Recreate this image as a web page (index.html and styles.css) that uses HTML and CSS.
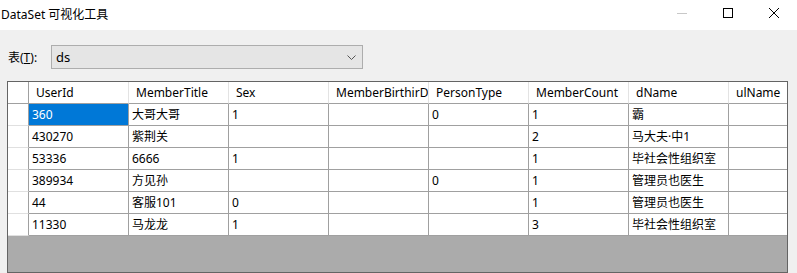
FILE: index.html
```html
<!DOCTYPE html>
<html lang="zh">
<head>
  <meta charset="UTF-8" />
  <title>DataSet 可视化工具</title>
  <link rel="stylesheet" href="styles.css">
</head>
<body>
  <div class="window">
    <div class="titlebar">
      <span class="title">DataSet 可视化工具</span>
      <div class="controls">
        <span class="ctl min"><svg width="10" height="10" viewBox="0 0 10 10"><path d="M0 5.5h10" stroke="#c8c8c8" stroke-width="1"/></svg></span>
        <span class="ctl"><svg width="10" height="10" viewBox="0 0 10 10"><rect x="0.5" y="0.5" width="9" height="9" fill="none" stroke="#000" stroke-width="1"/></svg></span>
        <span class="ctl"><svg width="10" height="10" viewBox="0 0 10 10"><path d="M0 0L10 10M10 0L0 10" stroke="#000" stroke-width="1"/></svg></span>
      </div>
    </div>

    <div class="content">
      <div class="toolbar">
        <label class="lbl">表(<u>T</u>):</label>
        <div class="combo">
          <span>ds</span>
          <svg class="chev" width="9" height="5" viewBox="0 0 9 5"><path d="M0.5 0.5L4.5 4.5L8.5 0.5" fill="none" stroke="#555" stroke-width="1"/></svg>
        </div>
      </div>

      <div class="grid">
        <table>
          <thead>
            <tr>
              <th class="rh"></th>
              <th>UserId</th>
              <th>MemberTitle</th>
              <th>Sex</th>
              <th>MemberBirthirDate</th>
              <th>PersonType</th>
              <th>MemberCount</th>
              <th>dName</th>
              <th>ulName</th>
            </tr>
          </thead>
          <tbody>
            <tr><td class="rh"></td><td class="sel">360</td><td>大哥大哥</td><td>1</td><td></td><td>0</td><td>1</td><td>霸</td><td></td></tr>
            <tr><td class="rh"></td><td>430270</td><td>紫荆关</td><td></td><td></td><td></td><td>2</td><td>马大夫·中1</td><td></td></tr>
            <tr><td class="rh"></td><td>53336</td><td>6666</td><td>1</td><td></td><td></td><td>1</td><td>毕社会性组织室</td><td></td></tr>
            <tr><td class="rh"></td><td>389934</td><td>方见孙</td><td></td><td></td><td>0</td><td>1</td><td>管理员也医生</td><td></td></tr>
            <tr><td class="rh"></td><td>44</td><td>客服101</td><td>0</td><td></td><td></td><td>1</td><td>管理员也医生</td><td></td></tr>
            <tr><td class="rh"></td><td>11330</td><td>马龙龙</td><td>1</td><td></td><td></td><td>3</td><td>毕社会性组织室</td><td></td></tr>
          </tbody>
        </table>
      </div>
    </div>
  </div>
</body>
</html>
```

FILE: styles.css
```css
* {
  box-sizing: border-box;
  margin: 0;
  padding: 0;
}

body {
  font-family: "Noto Sans", "Noto Sans CJK SC", sans-serif;
  font-size: 12px;
  color: #000;
  background: #f0f0f0;
  overflow: hidden;
}

.window {
  width: 797px;
  height: 273px;
  display: flex;
  flex-direction: column;
}

.titlebar {
  height: 30px;
  background: #fff;
  display: flex;
  align-items: center;
  justify-content: space-between;
  flex-shrink: 0;
}

.title {
  padding-left: 1px;
  padding-bottom: 3px;
}

.controls {
  display: flex;
  height: 100%;
}

.ctl {
  width: 46px;
  height: 100%;
  display: flex;
  align-items: center;
  justify-content: center;
  padding-bottom: 4px;
}

.ctl svg {
  display: block;
}

.content {
  flex: 1;
  display: flex;
  flex-direction: column;
  padding: 15px 9px 0 7px;
  min-height: 0;
}

.toolbar {
  display: flex;
  align-items: center;
  height: 24px;
}

.lbl {
  width: 44px;
  padding-left: 1px;
}

.combo {
  width: 312px;
  height: 24px;
  background: #e5e5e5;
  border: 1px solid #adadad;
  display: flex;
  align-items: center;
  justify-content: space-between;
  padding: 0 6px 0 4px;
  font-size: 13px;
}

.chev {
  display: block;
}

.grid {
  margin-top: 12px;
  flex: 1;
  border: 1px solid #646464;
  background: #ababab;
  overflow: hidden;
}

table {
  border-collapse: separate;
  border-spacing: 0;
  table-layout: fixed;
  width: 821px;
  background: #fff;
}

th, td {
  width: 100px;
  height: 22px;
  border-right: 1px solid #a0a0a0;
  border-bottom: 1px solid #a0a0a0;
  text-align: left;
  font-weight: normal;
  white-space: nowrap;
  overflow: hidden;
  text-overflow: clip;
  padding: 0 3px;
  line-height: 21px;
}

th {
  border-right-color: #e3e3e3;
  padding-left: 7px;
}

.rh {
  width: 21px;
  border-right-color: #a0a0a0;
  border-bottom-color: #e0e0e0;
}

th.rh {
  border-bottom-color: #a0a0a0;
}

td.sel {
  background: #0078d7;
  color: #fff;
}
```
